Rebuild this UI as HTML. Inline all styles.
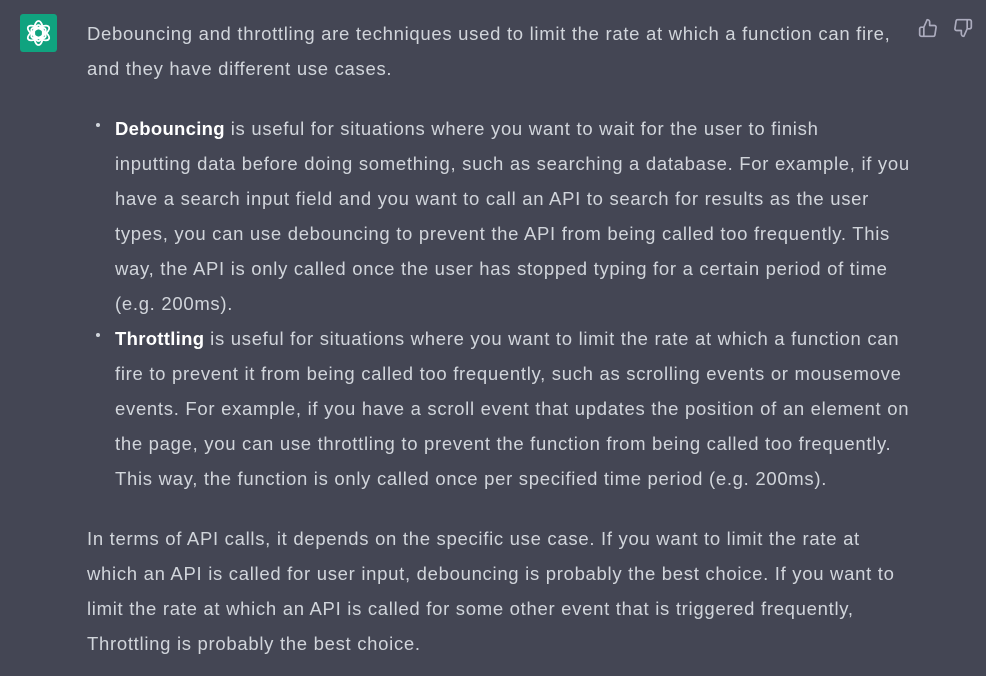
<!DOCTYPE html>
<html><head><meta charset="utf-8"><style>
html,body{margin:0;padding:0;background:#444654;width:986px;height:676px;overflow:hidden}
body{font-family:"Liberation Sans",sans-serif;font-size:18.5px;letter-spacing:0.7px;color:#d1d5db;position:relative}
.l{position:absolute;white-space:nowrap;line-height:35px;height:35px}
b{color:#fff;font-weight:bold;letter-spacing:0.3px}
.logo{position:absolute;left:20px;top:14px;width:37px;height:38px;background:#10a37f;border-radius:3px}
.dot{position:absolute;width:4px;height:4px;border-radius:2px;background:#d1d5db}
</style></head><body>
<div class="logo"><svg width="37" height="38" viewBox="0 0 37 38"><g fill="none" stroke="#fff" stroke-width="1.8">
<g transform="translate(18.5 19)">
<ellipse rx="4.5" ry="10" transform="rotate(0) translate(0 -2)"/>
<ellipse rx="4.5" ry="10" transform="rotate(60) translate(0 -2)"/>
<ellipse rx="4.5" ry="10" transform="rotate(120) translate(0 -2)"/>
<ellipse rx="4.5" ry="10" transform="rotate(180) translate(0 -2)"/>
<ellipse rx="4.5" ry="10" transform="rotate(240) translate(0 -2)"/>
<ellipse rx="4.5" ry="10" transform="rotate(300) translate(0 -2)"/>
</g></g></svg></div>
<svg style="position:absolute;left:918px;top:18px" width="20" height="20" viewBox="0 0 24 24" fill="none" stroke="#acacbe" stroke-width="2" stroke-linejoin="round"><path d="M14 9V5a3 3 0 0 0-3-3l-4 9v11h11.3a2 2 0 0 0 2-1.7l1.4-9A2 2 0 0 0 19.7 9z M7 22H4a2 2 0 0 1-2-2v-7a2 2 0 0 1 2-2h3"/></svg>
<svg style="position:absolute;left:953px;top:18px" width="20" height="20" viewBox="0 0 24 24" fill="none" stroke="#acacbe" stroke-width="2" stroke-linejoin="round"><path d="M10 15v4a3 3 0 0 0 3 3l4-9V2H5.7a2 2 0 0 0-2 1.7l-1.4 9A2 2 0 0 0 4.3 15z M17 2h2.7A2.3 2.3 0 0 1 22 4v7a2.3 2.3 0 0 1-2.3 2H17"/></svg>
<div class="l" style="left:87px;top:16px">Debouncing and throttling are techniques used to limit the rate at which a function can fire,</div>
<div class="l" style="left:87px;top:51px">and they have different use cases.</div>
<div class="dot" style="left:96px;top:123px"></div>
<div class="l" style="left:115px;top:111px"><b>Debouncing</b> is useful for situations where you want to wait for the user to finish</div>
<div class="l" style="left:115px;top:146px">inputting data before doing something, such as searching a database. For example, if you</div>
<div class="l" style="left:115px;top:181px">have a search input field and you want to call an API to search for results as the user</div>
<div class="l" style="left:115px;top:216px">types, you can use debouncing to prevent the API from being called too frequently. This</div>
<div class="l" style="left:115px;top:251px">way, the API is only called once the user has stopped typing for a certain period of time</div>
<div class="l" style="left:115px;top:286px">(e.g. 200ms).</div>
<div class="dot" style="left:96px;top:333px"></div>
<div class="l" style="left:115px;top:321px"><b>Throttling</b> is useful for situations where you want to limit the rate at which a function can</div>
<div class="l" style="left:115px;top:356px">fire to prevent it from being called too frequently, such as scrolling events or mousemove</div>
<div class="l" style="left:115px;top:391px">events. For example, if you have a scroll event that updates the position of an element on</div>
<div class="l" style="left:115px;top:426px">the page, you can use throttling to prevent the function from being called too frequently.</div>
<div class="l" style="left:115px;top:461px">This way, the function is only called once per specified time period (e.g. 200ms).</div>
<div class="l" style="left:87px;top:521px">In terms of API calls, it depends on the specific use case. If you want to limit the rate at</div>
<div class="l" style="left:87px;top:556px">which an API is called for user input, debouncing is probably the best choice. If you want to</div>
<div class="l" style="left:87px;top:591px">limit the rate at which an API is called for some other event that is triggered frequently,</div>
<div class="l" style="left:87px;top:626px">Throttling is probably the best choice.</div>
</body></html>
